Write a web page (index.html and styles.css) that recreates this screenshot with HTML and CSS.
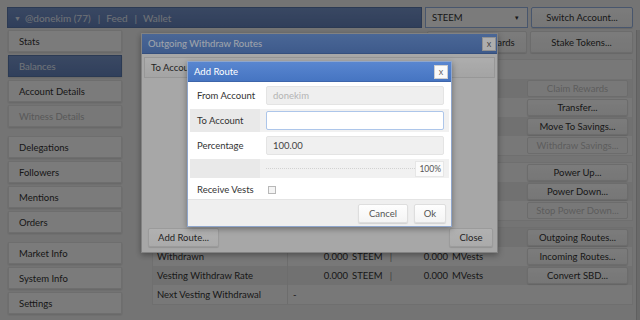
FILE: index.html
```html
<!DOCTYPE html>
<html lang="en">
<head>
    <meta charset="UTF-8">
    <title>Wallet</title>
    <link rel="stylesheet" href="styles.css">
</head>
<body>
    <div class="app">
        <div class="topbar">
            <div class="userbar"><span class="caret">&#9660;</span>@donekim (77)<span class="sep">|</span>Feed<span class="sep">|</span>Wallet</div>
            <div class="select">STEEM<span class="arrow">&#9662;</span></div>
            <button class="btn switch">Switch Account...</button>
        </div>
        <div class="main">
            <div class="sidebar">
                <div class="group">
                    <button class="nav">Stats</button>
                    <button class="nav active">Balances</button>
                    <button class="nav">Account Details</button>
                    <button class="nav off">Witness Details</button>
                </div>
                <div class="group">
                    <button class="nav">Delegations</button>
                    <button class="nav">Followers</button>
                    <button class="nav">Mentions</button>
                    <button class="nav">Orders</button>
                </div>
                <div class="group">
                    <button class="nav">Market Info</button>
                    <button class="nav">System Info</button>
                    <button class="nav">Settings</button>
                </div>
            </div>
            <div class="content">
                <div class="actions">
                    <button class="btn act">Delegate Rewards</button>
                    <button class="btn act wide">Stake Tokens...</button>
                </div>
                <div class="balances">
                    <div class="section">
                        <div class="row"><div class="label">STEEM</div><div class="value"></div><div class="cmd"></div></div>
                        <div class="row alt"><div class="label">Reward Balance</div><div class="value"><span class="amt">0.000</span><span class="unit">STEEM</span></div><div class="cmd"><button class="btn cb off">Claim Rewards</button></div></div>
                        <div class="row"><div class="label">Balance</div><div class="value"><span class="amt">0.000</span><span class="unit">STEEM</span></div><div class="cmd"><button class="btn cb">Transfer...</button></div></div>
                        <div class="row alt"><div class="label">Savings</div><div class="value"><span class="amt">0.000</span><span class="unit">STEEM</span></div><div class="cmd"><button class="btn cb">Move To Savings...</button></div></div>
                        <div class="row"><div class="label">Savings Pending</div><div class="value"><span class="amt">0.000</span><span class="unit">STEEM</span></div><div class="cmd"><button class="btn cb off">Withdraw Savings...</button></div></div>
                    </div>
                    <div class="section">
                        <div class="row"><div class="label">Steem Power</div><div class="value"><span class="amt">0.000</span><span class="unit">STEEM</span></div><div class="cmd"><button class="btn cb">Power Up...</button></div></div>
                        <div class="row alt"><div class="label">Delegated</div><div class="value"><span class="amt">0.000</span><span class="unit">STEEM</span></div><div class="cmd"><button class="btn cb">Power Down...</button></div></div>
                        <div class="row"><div class="label">Received</div><div class="value"><span class="amt">0.000</span><span class="unit">STEEM</span></div><div class="cmd"><button class="btn cb off">Stop Power Down...</button></div></div>
                    </div>
                    <div class="section">
                        <div class="row alt"><div class="label">To Withdraw</div><div class="value"><span class="amt">0.000</span><span class="unit">STEEM</span></div><div class="cmd"><button class="btn cb">Outgoing Routes...</button></div></div>
                        <div class="row"><div class="label">Withdrawn</div><div class="value"><span class="amt">0.000</span><span class="unit">STEEM</span><span class="bar">|</span><span class="amt2">0.000</span><span class="unit">MVests</span></div><div class="cmd"><button class="btn cb">Incoming Routes...</button></div></div>
                        <div class="row alt"><div class="label">Vesting Withdraw Rate</div><div class="value"><span class="amt">0.000</span><span class="unit">STEEM</span><span class="bar">|</span><span class="amt2">0.000</span><span class="unit">MVests</span></div><div class="cmd"><button class="btn cb">Convert SBD...</button></div></div>
                        <div class="row"><div class="label">Next Vesting Withdrawal</div><div class="value"><span class="dash">-</span></div><div class="cmd"></div></div>
                    </div>
                </div>
            </div>
            <div class="scroll"></div>
        </div>
    </div>

    <div class="shade"></div>
    <div class="dialog outgoing">
        <div class="titlebar">Outgoing Withdraw Routes<button class="close">x</button></div>
        <div class="dbody">
            <div class="thead"><span class="th first">To Account</span><span class="th">Percentage</span><span class="th">Auto Vest</span></div>
            <div class="empty"></div>
            <div class="footer">
                <button class="btn dbtn add">Add Route...</button>
                <button class="btn dbtn">Close</button>
            </div>
        </div>
    </div>

    <div class="shade"></div>
    <div class="dialog addroute">
        <div class="titlebar">Add Route<button class="close">x</button></div>
        <div class="form">
            <div class="frow"><div class="flabel">From Account</div><div class="ffield"><div class="input ro">donekim</div></div></div>
            <div class="frow alt"><div class="flabel">To Account</div><div class="ffield"><div class="input focus"></div></div></div>
            <div class="frow"><div class="flabel">Percentage</div><div class="ffield"><div class="input grey">100.00</div></div></div>
            <div class="frow alt slim"><div class="flabel"></div><div class="ffield"><div class="track"></div><div class="pct">100%</div></div></div>
            <div class="frow slim"><div class="flabel">Receive Vests</div><div class="ffield"><span class="check"></span></div></div>
        </div>
        <div class="dfoot">
            <button class="btn fbtn">Cancel</button>
            <button class="btn fbtn ok">Ok</button>
        </div>
    </div>
</body>
</html>
```

FILE: styles.css
```css
*{margin:0;padding:0;box-sizing:border-box;}
body{
    width:640px;
    height:320px;
    overflow:hidden;
    position:relative;
    background:#f0f0f0;
    font:9.5px "Lato","Open Sans","Liberation Sans",sans-serif;
    color:#333;
}
button{font:inherit;color:inherit;cursor:default;}

.app{padding:7px 0 0 7px;}

/* top bar */
.topbar{display:flex;height:21px;width:626px;gap:3px;}
.userbar{
    flex:1;
    display:flex;
    align-items:center;
    padding-left:6px;
    background:linear-gradient(#7694cb,#6482bb);
    border:1px solid #5b78ad;
    color:#e4eaf4;
    font-size:10px;
}
.caret{font-size:7px;margin-right:4px;color:#dfe6f2;}
.sep{margin:0 6px 0 7px;}
.select{
    width:103px;
    display:flex;
    align-items:center;
    justify-content:space-between;
    padding:0 8px 0 6px;
    background:#fdfdfd;
    border:1px solid #94b2e0;
}
.arrow{font-size:7px;}
.btn{
    background:linear-gradient(#fefefe,#f4f4f4);
    border:1px solid #dedede;
    border-radius:2px;
    box-shadow:0 1px 1px rgba(0,0,0,.12);
}
.switch{width:102px;border-color:#94b2e0;}

/* layout */
.main{display:flex;margin-top:2px;}
.sidebar{width:115px;padding-left:1px;display:flex;flex-direction:column;gap:9px;}
.group{display:flex;flex-direction:column;gap:3px;}
.nav{
    height:22px;
    text-align:left;
    padding-left:10px;
    background:#fcfcfc;
    border:1px solid #e2e2e2;
    box-shadow:0 1px 2px rgba(0,0,0,.14);
}
.nav.active{background:linear-gradient(#7896cc,#6483bd);border-color:#5a77ab;color:#e8eef8;}
.nav.off{color:#b8b8b8;background:#f6f6f6;}

.content{width:507px;margin-left:4px;}
.actions{display:flex;justify-content:flex-end;gap:3px;height:22px;margin-top:1px;}
.act{width:100px;}
.act.wide{width:103px;}

.balances{margin:6px 0 0 26px;display:flex;flex-direction:column;gap:6px;}
.section{border:1px solid #e4e4e4;background:#f7f7f7;}
.row{display:flex;height:19px;align-items:center;}
.row.alt{background:#e9e9e9;}
.label{width:134px;padding-left:4px;}
.value{width:240px;height:100%;display:flex;align-items:center;border-left:1px solid #e0e0e0;}
.amt{width:60px;text-align:right;}
.amt2{width:52px;text-align:right;}
.unit{margin-left:4px;width:30px;}
.bar{width:10px;margin-left:4px;text-align:center;color:#888;}
.dash{margin-left:5px;}
.cmd{width:104px;}
.cb{width:101px;height:17px;}
.cb.off{color:#c0c0c0;background:#f8f8f8;box-shadow:none;}

.scroll{width:4px;margin-left:3px;height:292px;background:#dadada;border-left:1px solid #c6c6c6;}

/* modal shading */
.shade{position:absolute;top:0;left:0;right:0;bottom:0;background:rgba(0,0,0,.3);}

.dialog{
    position:absolute;
    background:#f0f0f0;
    border:1px solid #bbb;
    box-shadow:0 2px 6px rgba(0,0,0,.35);
    display:flex;
    flex-direction:column;
}
.titlebar{
    height:20px;
    display:flex;
    align-items:center;
    justify-content:space-between;
    padding:0 3px 0 6px;
    background:linear-gradient(#5986d0,#4675c2);
    border-bottom:1px solid #3d65aa;
    color:#fff;
}
.close{
    width:14px;
    height:14px;
    line-height:11px;
    font-size:9px;
    background:#fafafa;
    border:1px solid #cfcfcf;
    color:#666;
}

.outgoing{left:141px;top:33px;width:357px;height:220px;}
.outgoing .titlebar{padding-right:1px;background:linear-gradient(#6b94d8,#5982c8);border-bottom-color:#4d72b4;color:#e6ecf6;}
.dbody{flex:1;display:flex;flex-direction:column;padding:3px 2px 5px 2px;}
.thead{
    height:21px;
    display:flex;
    align-items:center;
    background:linear-gradient(#f8f8f8,#ebebeb);
    border:1px solid #d8d8d8;
}
.th{width:110px;padding-left:6px;}
.empty{flex:1;}
.footer{display:flex;justify-content:space-between;padding:0 2px 0 4px;}
.dbtn{height:19px;width:44px;}
.dbtn.add{width:71px;}

.addroute{left:187px;top:61px;width:265px;height:166px;background:#fff;border-color:#8fa6cc;}
.form{padding:2px 2px 0 2px;display:flex;flex-direction:column;gap:2px;}
.frow{display:flex;height:23px;}
.frow.slim{height:19px;}
.frow.alt{background:#f1f1f1;}
.flabel{width:70px;padding-left:7px;display:flex;align-items:center;color:#333;}
.frow.alt .flabel{background:#e9e9e9;}
.ffield{flex:1;display:flex;align-items:center;padding:0 5px 0 6px;}
.input{width:100%;height:19px;display:flex;align-items:center;padding-left:6px;border:1px solid #e4e4e4;border-radius:2px;}
.input.ro{background:#efefef;color:#b4b4b4;}
.input.grey{background:#f0f0f0;color:#444;}
.input.focus{background:#fff;border-color:#adc6ea;}
.track{flex:1;border-top:1px dotted #d2d2d2;}
.pct{width:29px;height:16px;line-height:15px;text-align:right;padding-right:2px;background:#fbfbfb;border:1px solid #e6e6e6;font-size:8.5px;color:#555;}
.check{width:8px;height:8px;margin-left:2px;border:1px solid #b8b8b8;background:#f4f4f4;}

.dfoot{
    margin-top:auto;
    height:27px;
    display:flex;
    justify-content:flex-end;
    align-items:center;
    gap:6px;
    padding-right:5px;
    background:#efefef;
    border-top:1px solid #e4e4e4;
}
.fbtn{height:19px;width:50px;color:#555;}
.fbtn.ok{width:32px;}
```
